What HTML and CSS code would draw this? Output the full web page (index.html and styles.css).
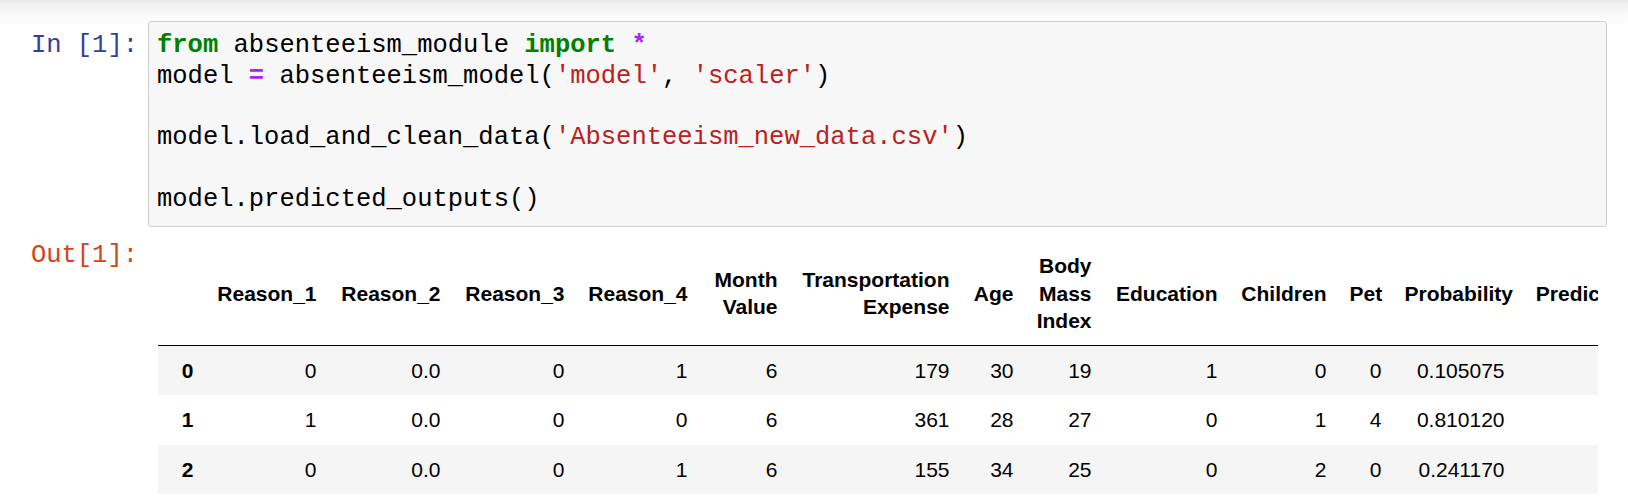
FILE: index.html
```html
<!DOCTYPE html>
<html>
<head>
<meta charset="utf-8">
<title>Notebook</title>
<link rel="stylesheet" href="styles.css">
</head>
<body>
<div class="page">
  <div class="cell">
    <div class="prompt prompt-in">In&nbsp;[1]:</div>
    <pre class="code"><span class="kw">from</span> absenteeism_module <span class="kw">import</span> <span class="op">*</span>
model <span class="op">=</span> absenteeism_model(<span class="str">'model'</span>, <span class="str">'scaler'</span>)

model.load_and_clean_data(<span class="str">'Absenteeism_new_data.csv'</span>)

model.predicted_outputs()</pre>
  </div>
  <div class="cell output">
    <div class="prompt prompt-out">Out[1]:</div>
    <div class="out-area">
      <table class="df">
        <colgroup>
          <col class="c-idx"><col class="c-r1"><col class="c-r2"><col class="c-r3"><col class="c-r4"><col class="c-month"><col class="c-trans"><col class="c-age"><col class="c-bmi"><col class="c-edu"><col class="c-child"><col class="c-pet"><col class="c-prob"><col class="c-pred">
        </colgroup>
        <thead>
          <tr>
            <th></th>
            <th>Reason_1</th>
            <th>Reason_2</th>
            <th>Reason_3</th>
            <th>Reason_4</th>
            <th>Month<br>Value</th>
            <th>Transportation<br>Expense</th>
            <th>Age</th>
            <th>Body<br>Mass<br>Index</th>
            <th>Education</th>
            <th>Children</th>
            <th>Pet</th>
            <th>Probability</th>
            <th>Prediction</th>
          </tr>
        </thead>
        <tbody>
          <tr>
            <th>0</th><td>0</td><td>0.0</td><td>0</td><td>1</td><td>6</td><td>179</td><td>30</td><td>19</td><td>1</td><td>0</td><td>0</td><td>0.105075</td><td>0</td>
          </tr>
          <tr>
            <th>1</th><td>1</td><td>0.0</td><td>0</td><td>0</td><td>6</td><td>361</td><td>28</td><td>27</td><td>0</td><td>1</td><td>4</td><td>0.810120</td><td>1</td>
          </tr>
          <tr>
            <th>2</th><td>0</td><td>0.0</td><td>0</td><td>1</td><td>6</td><td>155</td><td>34</td><td>25</td><td>0</td><td>2</td><td>0</td><td>0.241170</td><td>0</td>
          </tr>
        </tbody>
      </table>
    </div>
  </div>
</div>
</body>
</html>
```

FILE: styles.css
```css
html, body {
  margin: 0;
  padding: 0;
  background: #ffffff;
}

.page {
  width: 1628px;
  height: 496px;
  box-sizing: border-box;
  padding-top: 21px;
  overflow: hidden;
  background: linear-gradient(to bottom, #e6e6e6 0px, #f0f0f0 4px, #fafafa 16px, #ffffff 26px) no-repeat;
  background-size: 100% 26px;
}

.cell {
  display: flex;
  align-items: flex-start;
}

.prompt {
  flex: 0 0 148px;
  box-sizing: border-box;
  padding-right: 10px;
  text-align: right;
  font-family: "Liberation Mono", monospace;
  font-size: 25.5px;
  line-height: 30.7px;
  white-space: nowrap;
}

.prompt-in {
  color: #303f9f;
  padding-top: 10px;
}

.prompt-out {
  color: #d84315;
}

.code {
  margin: 0;
  width: 1459px;
  box-sizing: border-box;
  padding: 9px 8px 11px 8px;
  background: #f7f7f7;
  border: 1px solid #cfcfcf;
  border-radius: 3px;
  font-family: "Liberation Mono", monospace;
  font-size: 25.5px;
  line-height: 30.7px;
  color: #000000;
  white-space: pre;
}

.kw {
  color: #008000;
  font-weight: bold;
}

.op {
  color: #aa22ff;
  font-weight: bold;
}

.str {
  color: #ba2121;
}

.output {
  margin-top: 14px;
}

.out-area {
  margin-left: 10px;
  width: 1440px;
  overflow: hidden;
  padding-top: 1px;
}

.df {
  table-layout: fixed;
  width: 1492px;
  border-collapse: collapse;
  border-spacing: 0;
  font-family: "Liberation Sans", Arial, sans-serif;
  font-size: 21px;
  color: #000000;
}

.df th,
.df td {
  text-align: right;
  vertical-align: middle;
  line-height: 27.5px;
  padding: 11px 11.5px;
  white-space: nowrap;
  border: none;
}

.df thead {
  border-bottom: 1px solid #000000;
}

.df thead th {
  padding-top: 10px;
  padding-bottom: 10px;
  font-weight: bold;
}

.df tbody th {
  font-weight: bold;
}

.df tbody td {
  font-weight: normal;
}

.df tbody tr:nth-child(odd) {
  background: #f5f5f5;
}

.c-idx { width: 47px; }
.c-r1 { width: 123px; }
.c-r2 { width: 124px; }
.c-r3 { width: 124px; }
.c-r4 { width: 123px; }
.c-month { width: 90px; }
.c-trans { width: 172px; }
.c-age { width: 64px; }
.c-bmi { width: 78px; }
.c-edu { width: 126px; }
.c-child { width: 109px; }
.c-pet { width: 55px; }
.c-prob { width: 123px; }
.c-pred { width: 134px; }
```
